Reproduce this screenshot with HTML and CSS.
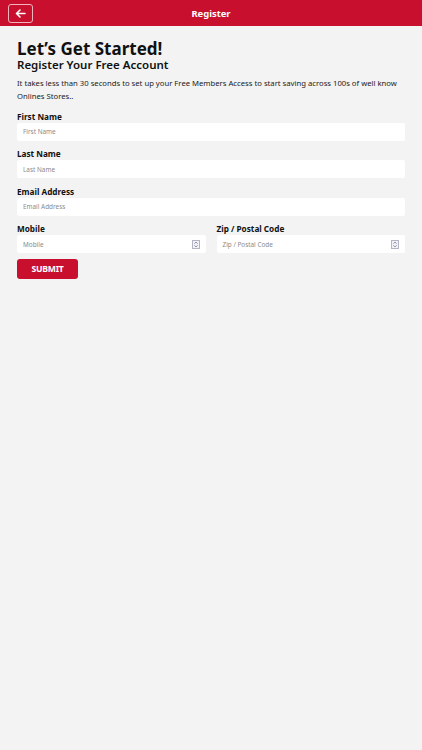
FILE: index.html
```html
<!DOCTYPE html>
<html lang="en">
<head>
<meta charset="utf-8">
<title>Register</title>
<link rel="stylesheet" href="styles.css">
</head>
<body>
<header class="topbar">
  <button class="back" aria-label="Back">
    <svg width="11" height="9" viewBox="0 0 11 9"><path d="M10 4.5H1.5M5 1L1.5 4.5L5 8" fill="none" stroke="#fff" stroke-width="1.6" stroke-linecap="round" stroke-linejoin="round"/></svg>
  </button>
  <div class="title">Register</div>
</header>
<main class="content">
  <h1 class="h1">Let’s Get Started!</h1>
  <h2 class="h2">Register Your Free Account</h2>
  <p class="intro">It takes less than 30 seconds to set up your Free Members Access to start saving across 100s of well know Onlines Stores..</p>
  <form class="form">
    <div class="field">
      <label class="label">First Name</label>
      <div class="input"><span class="ph">First Name</span></div>
    </div>
    <div class="field">
      <label class="label">Last Name</label>
      <div class="input"><span class="ph">Last Name</span></div>
    </div>
    <div class="field">
      <label class="label">Email Address</label>
      <div class="input"><span class="ph">Email Address</span></div>
    </div>
    <div class="row">
      <div class="field">
        <label class="label">Mobile</label>
        <div class="input"><span class="ph">Mobile</span><span class="spin"><svg width="8" height="9" viewBox="0 0 8 9"><rect x="0.5" y="0.5" width="7" height="8" fill="#f2f2f6" stroke="#b4b4c4"/><path d="M2.5 3.6L4 2.1L5.5 3.6M2.5 5.4L4 6.9L5.5 5.4" fill="none" stroke="#6a6a80" stroke-width="0.8"/></svg></span></div>
      </div>
      <div class="field">
        <label class="label">Zip / Postal Code</label>
        <div class="input"><span class="ph">Zip / Postal Code</span><span class="spin"><svg width="8" height="9" viewBox="0 0 8 9"><rect x="0.5" y="0.5" width="7" height="8" fill="#f2f2f6" stroke="#b4b4c4"/><path d="M2.5 3.6L4 2.1L5.5 3.6M2.5 5.4L4 6.9L5.5 5.4" fill="none" stroke="#6a6a80" stroke-width="0.8"/></svg></span></div>
      </div>
    </div>
    <div class="actions"><button type="button" class="submit">SUBMIT</button></div>
  </form>
</main>
</body>
</html>
```

FILE: styles.css
```css
html, body {
  margin: 0;
  padding: 0;
  background: #f3f3f3;
  font-family: "Noto Sans", "Open Sans", sans-serif;
  color: #111;
}
.topbar {
  height: 26px;
  background: #c8102e;
  display: flex;
  align-items: center;
  position: relative;
}
.back {
  margin-left: 8px;
  width: 25px;
  height: 19px;
  border: 1px solid #f0b4bf;
  border-radius: 3px;
  background: transparent;
  display: flex;
  align-items: center;
  justify-content: center;
  padding: 0;
  box-sizing: border-box;
}
.title {
  position: absolute;
  left: 0;
  right: 0;
  text-align: center;
  color: #fff;
  font-weight: 700;
  font-size: 9.4px;
  pointer-events: none;
}
.content {
  padding: 13.5px 17px 0;
}
.h1 {
  margin: 0;
  font-size: 17px;
  font-weight: 700;
  line-height: 18px;
}
.h2 {
  margin: 1px 0 0;
  font-size: 11.5px;
  font-weight: 600;
  line-height: 12px;
}
.intro {
  margin: 6.5px 0 0;
  font-size: 7.7px;
  line-height: 12.5px;
  color: #222;
}
.form {
  margin-top: 7.5px;
  display: flex;
  flex-direction: column;
  gap: 6.6px;
}
.field {
  display: flex;
  flex-direction: column;
}
.label {
  font-size: 8.2px;
  font-weight: 700;
  line-height: 13px;
}
.input {
  height: 18px;
  background: #fff;
  border-radius: 2px;
  display: flex;
  align-items: center;
  justify-content: space-between;
  padding: 0 6px;
}
.ph {
  font-size: 6.4px;
  color: #8a8a8a;
}
.spin {
  display: flex;
}
.row {
  display: grid;
  grid-template-columns: 1fr 1fr;
  gap: 11px;
}
.actions {
  display: flex;
  margin-top: -0.6px;
}
.submit {
  width: 61px;
  height: 20px;
  background: #c8102e;
  color: #fff;
  border: none;
  border-radius: 3px;
  font-family: inherit;
  font-weight: 700;
  font-size: 8.6px;
  letter-spacing: -0.2px;
  padding: 0;
}
```
